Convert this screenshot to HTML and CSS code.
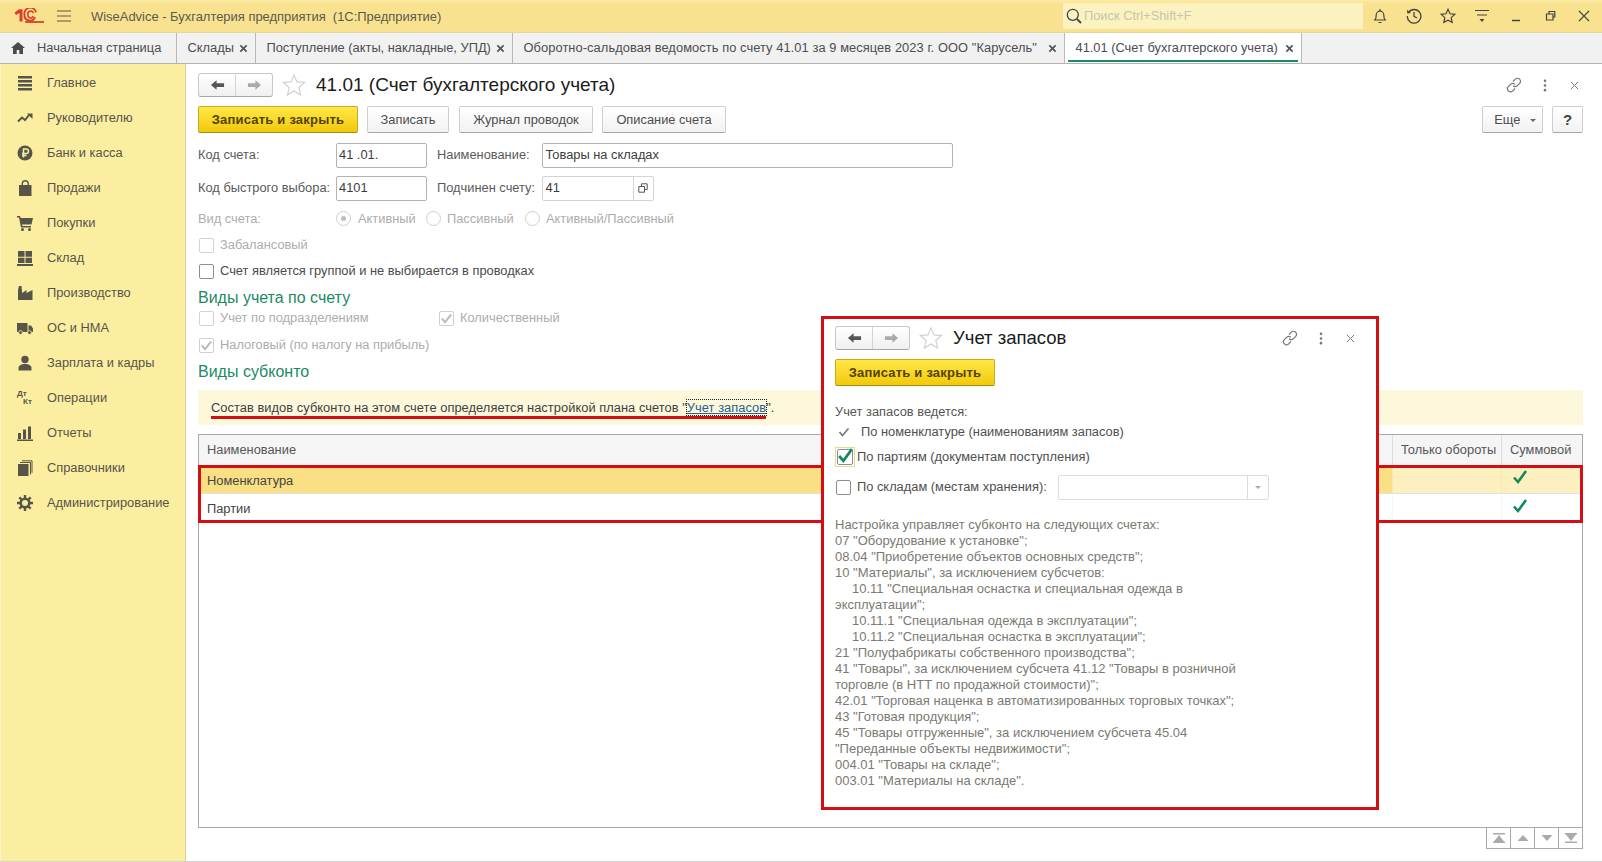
FILE: index.html
```html
<!DOCTYPE html>
<html lang="ru">
<head>
<meta charset="utf-8">
<title>41.01 (Счет бухгалтерского учета)</title>
<link rel="stylesheet" href="styles.css">
</head>
<body>
<svg class="defs" width="0" height="0" aria-hidden="true">
  <defs>
    <symbol id="i-back" viewBox="0 0 16 12"><path d="M1 6l6-5v3h8v4H7v3z"/></symbol>
    <symbol id="i-fwd" viewBox="0 0 16 12"><path d="M15 6L9 1v3H1v4h8v3z"/></symbol>
    <symbol id="i-star" viewBox="0 0 26 26"><path d="M13 2l3.2 7.6 8.3.7-6.3 5.4 1.9 8.1L13 19.5l-7.1 4.3 1.9-8.1-6.3-5.4 8.3-.7z" fill="#fff" stroke="#cfcfcf" stroke-width="1.2"/></symbol>
    <symbol id="i-link" viewBox="0 0 16 16"><g fill="none" stroke="#777" stroke-width="1.2"><path d="M7 4.5l2.3-2.3a3 3 0 0 1 4.4 4.2L11.4 8.7a3 3 0 0 1-4.2 0"/><path d="M9 11.5l-2.3 2.3a3 3 0 0 1-4.4-4.2l2.3-2.3a3 3 0 0 1 4.2 0"/></g></symbol>
    <symbol id="i-kebab" viewBox="0 0 4 14"><circle cx="2" cy="2" r="1.4" fill="#777"/><circle cx="2" cy="7" r="1.4" fill="#777"/><circle cx="2" cy="12" r="1.4" fill="#777"/></symbol>
    <symbol id="i-x" viewBox="0 0 10 10"><path d="M1 1l8 8M9 1l-8 8" fill="none" stroke="#777" stroke-width="1.1"/></symbol>
    <symbol id="i-tabx" viewBox="0 0 10 10"><path d="M1.5 1.5l7 7M8.5 1.5l-7 7" fill="none" stroke="#555" stroke-width="1.9"/></symbol>
    <symbol id="i-tick" viewBox="0 0 16 16"><path d="M2 8.5l4 4.5 8-11" fill="none" stroke="#118a5e" stroke-width="2.6"/></symbol>
    <symbol id="i-gtick" viewBox="0 0 14 14"><path d="M2 7l3.5 4L12 2.500" fill="none" stroke="#bdbdbd" stroke-width="2.2"/></symbol>
  </defs>
</svg>

<div class="app">
  <header class="titlebar">
    <svg class="logo" viewBox="0 0 30 16" width="30" height="16">
      <path d="M.5 4.800L5 1.200H8.500V13.500H5.500V5L2 7z" fill="#d8402b"/>
      <path d="M22 4.200A5.400 5.400 0 0 0 10.500 7a5.400 5.400 0 0 0 10.500 2" fill="none" stroke="#d8402b" stroke-width="1.900"/>
      <path d="M19.500 5.200A2.500 2.500 0 0 0 14 7a2.500 2.500 0 0 0 5 .8" fill="none" stroke="#d8402b" stroke-width="1.600"/>
      <path d="M11 14h19" stroke="#d8402b" stroke-width="1.800"/>
    </svg>
    <svg class="burger" viewBox="0 0 14 12" width="14" height="12"><path d="M0 1h14M0 6h14M0 11h14" stroke="#5d5a4a" stroke-width="1.200"/></svg>
    <span class="app-name">WiseAdvice - Бухгалтерия предприятия&nbsp; (1С:Предприятие)</span>
    <div class="search">
      <svg viewBox="0 0 16 16" width="16" height="16"><circle cx="6.800" cy="6.800" r="5.500" fill="none" stroke="#444" stroke-width="1.300"/><path d="M11 11l4 4" stroke="#444" stroke-width="1.800"/></svg>
      <span>Поиск Ctrl+Shift+F</span>
    </div>
    <div class="sys">
      <svg viewBox="0 0 16 16" width="16" height="16"><path d="M3 12c1.200-1.500 1.200-3 1.200-5a3.800 3.800 0 0 1 7.600 0c0 2 0 3.500 1.200 5zM1.800 12h12.400M6.500 14.500h3M8 1v1.500" fill="none" stroke="#444" stroke-width="1.200"/></svg>
      <svg viewBox="0 0 16 16" width="16" height="16"><path d="M2.600 4.300A6.800 6.800 0 1 1 1.300 8M8 4v4.300l3 1.700" fill="none" stroke="#444" stroke-width="1.300"/><path d="M1 1.800l.3 3.700 3.600-.5z" fill="#444"/></svg>
      <svg viewBox="0 0 16 16" width="16" height="16"><path d="M8 1.300l2 4.500 4.900.5-3.700 3.300 1 4.800L8 12.100l-4.200 2.300 1-4.800L1.100 6.300 6 5.800z" fill="none" stroke="#444" stroke-width="1.200"/></svg>
      <svg viewBox="0 0 16 16" width="16" height="16"><path d="M1 2.500h14M3 7h10" stroke="#444" stroke-width="1.200"/><path d="M5.500 11h5L8 14z" fill="#444"/></svg>
      <svg viewBox="0 0 16 16" width="16" height="16"><path d="M4 12.500h8" stroke="#444" stroke-width="1.500"/></svg>
      <svg viewBox="0 0 16 16" width="16" height="16"><path d="M4.500 6h6.500v6H4.500zM7 6V3.500h5.800V9H11" fill="none" stroke="#444" stroke-width="1.200"/></svg>
      <svg viewBox="0 0 16 16" width="16" height="16"><path d="M3 3l10 10M13 3L3 13" stroke="#444" stroke-width="1.100"/></svg>
    </div>
  </header>

  <nav class="tabs">
    <div class="tab tab-home">
      <svg viewBox="0 0 14 12" width="14" height="12"><path d="M7 0L0 6h2v6h3.700V8h2.600v4H12V6h2z" fill="#4b4b4b"/></svg>
      <span>Начальная страница</span>
    </div>
    <div class="tab tab-a"><span>Склады</span><svg class="tx" viewBox="0 0 10 10"><use href="#i-tabx"/></svg></div>
    <div class="tab tab-b"><span>Поступление (акты, накладные, УПД)</span><svg class="tx" viewBox="0 0 10 10"><use href="#i-tabx"/></svg></div>
    <div class="tab tab-c"><span>Оборотно-сальдовая ведомость по счету 41.01 за 9 месяцев 2023 г. ООО "Карусель"</span><svg class="tx" viewBox="0 0 10 10"><use href="#i-tabx"/></svg></div>
    <div class="tab tab-d"><span>41.01 (Счет бухгалтерского учета)</span><svg class="tx" viewBox="0 0 10 10"><use href="#i-tabx"/></svg></div>
  </nav>

  <div class="workspace">
    <aside class="sidebar">
      <div class="side-item"><svg viewBox="0 0 16 16"><path d="M1 1h14v2.400H1zM1 5h14v2.400H1zM1 9h14v2.400H1zM1 13h14v2.400H1z"/></svg><span>Главное</span></div>
      <div class="side-item"><svg viewBox="0 0 16 16"><path d="M1 11.500l4-4 3 2.500 4-5" fill="none" stroke="#57554a" stroke-width="2"/><path d="M10 3.500h5.500V9z"/></svg><span>Руководителю</span></div>
      <div class="side-item"><svg viewBox="0 0 16 16"><circle cx="8" cy="8" r="7.500"/><path d="M6.500 12.500V4h2.700a2.200 2.200 0 0 1 0 4.500H5M5 10.500h4.500" fill="none" stroke="#fbeea0" stroke-width="1.500"/></svg><span>Банк и касса</span></div>
      <div class="side-item"><svg viewBox="0 0 16 16"><path d="M2 5h12.500v11H2z"/><path d="M5.300 7V3.200a3 3 0 0 1 5.900 0V7" fill="none" stroke="#57554a" stroke-width="1.400"/></svg><span>Продажи</span></div>
      <div class="side-item"><svg viewBox="0 0 16 16"><path d="M0 1h3l.700 2H16l-1.500 6.500H5L5.500 11H14v1.500H4L2 2.500H0z"/><circle cx="5.500" cy="14.500" r="1.500"/><circle cx="12.500" cy="14.500" r="1.500"/></svg><span>Покупки</span></div>
      <div class="side-item"><svg viewBox="0 0 16 16"><path d="M1 1h6.500v5.800H1zM8.500 1H15v5.800H8.500zM1 7.800h6.500v5.200H1zM8.500 7.800H15v5.200H8.500zM0 14h16v2H0z"/></svg><span>Склад</span></div>
      <div class="side-item"><svg viewBox="0 0 16 16"><path d="M1 15V5l1-4h2.500l.700 7 4.300-3v3l6-3v10z"/></svg><span>Производство</span></div>
      <div class="side-item"><svg viewBox="0 0 16 16"><path d="M0 3h10.500v9H0zM11.500 5.500H14l2 3V12h-4.500z"/><circle cx="3.500" cy="12.500" r="1.900" stroke="#fbeea0" stroke-width=".8"/><circle cx="12.500" cy="12.500" r="1.900" stroke="#fbeea0" stroke-width=".8"/></svg><span>ОС и НМА</span></div>
      <div class="side-item"><svg viewBox="0 0 16 16"><circle cx="8" cy="4.500" r="3.700"/><path d="M1.500 15.500v-2.500c0-2.500 3-4 6.500-4s6.500 1.500 6.500 4v2.500z"/></svg><span>Зарплата и кадры</span></div>
      <div class="side-item"><span class="dtkt"><b>Дт</b><b class="kt">Кт</b></span><span>Операции</span></div>
      <div class="side-item"><svg viewBox="0 0 16 16"><path d="M1 8h3v6H1zM6 4.500h3V14H6zM11 1.500h3V14h-3zM0 14.500h16V16H0z"/></svg><span>Отчеты</span></div>
      <div class="side-item"><svg viewBox="0 0 16 16"><path d="M1 4h10.500v12H1z"/><path d="M3 2.500h10.500v12M5 .8h10v12" fill="none" stroke="#57554a" stroke-width="1"/></svg><span>Справочники</span></div>
      <div class="side-item"><svg viewBox="0 0 16 16"><circle cx="8" cy="8" r="4.300" fill="none" stroke="#57554a" stroke-width="2.600"/><path d="M8 0v3M8 13v3M0 8h3M13 8h3M2.300 2.300l2.200 2.200M11.500 11.500l2.200 2.200M13.700 2.300l-2.200 2.200M4.500 11.500l-2.200 2.200" stroke="#57554a" stroke-width="2.400"/></svg><span>Администрирование</span></div>
    </aside>

    <main class="main">
      <div class="head">
        <div class="navpair">
          <span class="np-cell"><svg class="ar dark" viewBox="0 0 16 12"><use href="#i-back"/></svg></span>
          <span class="np-cell"><svg class="ar light" viewBox="0 0 16 12"><use href="#i-fwd"/></svg></span>
        </div>
        <svg class="star" viewBox="0 0 26 26"><use href="#i-star"/></svg>
        <h1 class="title">41.01 (Счет бухгалтерского учета)</h1>
        <div class="head-tools">
          <svg class="t-link" viewBox="0 0 16 16"><use href="#i-link"/></svg>
          <svg class="t-kebab" viewBox="0 0 4 14"><use href="#i-kebab"/></svg>
          <svg class="t-x" viewBox="0 0 10 10"><use href="#i-x"/></svg>
        </div>
      </div>

      <div class="cmd">
        <button class="btn btn-primary w-save">Записать и закрыть</button>
        <button class="btn w-write">Записать</button>
        <button class="btn w-journal">Журнал проводок</button>
        <button class="btn w-desc">Описание счета</button>
        <span class="cmd-fill"></span>
        <button class="btn w-more">Еще <i class="caret"></i></button>
        <button class="btn w-help">?</button>
      </div>

      <div class="frow frow-1">
        <label class="lbl lbl-a">Код счета:</label>
        <div class="input w-code">41 .01.</div>
        <label class="lbl lbl-b">Наименование:</label>
        <div class="input w-name">Товары на складах</div>
      </div>
      <div class="frow frow-2">
        <label class="lbl lbl-a">Код быстрого выбора:</label>
        <div class="input w-code">4101</div>
        <label class="lbl lbl-b">Подчинен счету:</label>
        <div class="input w-parent"><span class="pv">41</span><span class="pick"><svg viewBox="0 0 10 10" width="10" height="10"><path d="M3.500 3.500V.8h5.700v5.700H6.500M.8 3.500h5.700v5.700H.8z" fill="none" stroke="#555" stroke-width="1"/></svg></span></div>
      </div>

      <div class="frow frow-radio off">
        <label class="lbl lbl-a">Вид счета:</label>
        <span class="radio on r1"></span><span class="rt rt1">Активный</span>
        <span class="radio r2"></span><span class="rt rt2">Пассивный</span>
        <span class="radio r3"></span><span class="rt">Активный/Пассивный</span>
      </div>

      <div class="check-row off chk-gap"><span class="cb"></span><span>Забалансовый</span></div>
      <div class="check-row chk-last"><span class="cb dark"></span><span>Счет является группой и не выбирается в проводках</span></div>

      <h2 class="sec">Виды учета по счету</h2>
      <div class="check-row off chk-pair">
        <span class="cb"></span><span class="pair-a">Учет по подразделениям</span>
        <span class="cb ticked"><svg viewBox="0 0 14 14"><use href="#i-gtick"/></svg></span><span>Количественный</span>
      </div>
      <div class="check-row off chk-last2"><span class="cb ticked"><svg viewBox="0 0 14 14"><use href="#i-gtick"/></svg></span><span>Налоговый (по налогу на прибыль)</span></div>

      <h2 class="sec">Виды субконто</h2>
      <div class="info">
        <span class="info-text">Состав видов субконто на этом счете определяется настройкой плана счетов "<a class="link">Учет запасов</a>".</span>
      </div>

      <div class="table">
        <div class="t-row t-head">
          <div class="c c-name">Наименование</div>
          <div class="c c-turn">Только обороты</div>
          <div class="c c-sum">Суммовой</div>
        </div>
        <div class="t-row t-sel">
          <div class="c c-name">Номенклатура</div>
          <div class="c c-turn"></div>
          <div class="c c-sum"><svg class="tick" viewBox="0 0 16 16"><use href="#i-tick"/></svg></div>
        </div>
        <div class="t-row t-plain">
          <div class="c c-name">Партии</div>
          <div class="c c-turn"></div>
          <div class="c c-sum"><svg class="tick" viewBox="0 0 16 16"><use href="#i-tick"/></svg></div>
        </div>
        <div class="mark-rows"></div>
      </div>
      <div class="t-foot">
        <span class="pg"><svg viewBox="0 0 12 10" width="12" height="10"><path d="M0 0h12v1.500H0zM6 2l5 6.500H1zM0 8.500h12V10H0z" fill="#aaa"/></svg></span>
        <span class="pg"><svg viewBox="0 0 12 10" width="12" height="10"><path d="M6 2l5.500 6H.5z" fill="#aaa"/></svg></span>
        <span class="pg"><svg viewBox="0 0 12 10" width="12" height="10"><path d="M6 8L.5 2h11z" fill="#aaa"/></svg></span>
        <span class="pg"><svg viewBox="0 0 12 10" width="12" height="10"><path d="M0 0h12v1.500H0zM1 1.500h10L6 8zM0 8.500h12V10H0z" fill="#aaa"/></svg></span>
      </div>
    </main>
  </div>

  <section class="popup">
    <div class="head pop-head">
      <div class="navpair">
        <span class="np-cell"><svg class="ar dark" viewBox="0 0 16 12"><use href="#i-back"/></svg></span>
        <span class="np-cell"><svg class="ar light" viewBox="0 0 16 12"><use href="#i-fwd"/></svg></span>
      </div>
      <svg class="star" viewBox="0 0 26 26"><use href="#i-star"/></svg>
      <h1 class="title pop-title">Учет запасов</h1>
      <div class="head-tools pop-tools">
        <svg class="t-link" viewBox="0 0 16 16"><use href="#i-link"/></svg>
        <svg class="t-kebab" viewBox="0 0 4 14"><use href="#i-kebab"/></svg>
        <svg class="t-x" viewBox="0 0 10 10"><use href="#i-x"/></svg>
      </div>
    </div>
    <button class="btn btn-primary w-save pop-save">Записать и закрыть</button>
    <div class="pop-cap">Учет запасов ведется:</div>
    <div class="pop-line pl-1"><svg class="mini-tick" viewBox="0 0 14 14"><path d="M2.500 7l3 3.500 6-7" fill="none" stroke="#777" stroke-width="1.700"/></svg><span>По номенклатуре (наименованиям запасов)</span></div>
    <div class="pop-line pl-2"><span class="focus"><span class="cb dark big"><svg viewBox="0 0 16 16"><use href="#i-tick"/></svg></span></span><span>По партиям (документам поступления)</span></div>
    <div class="pop-line pl-3"><span class="cb dark big2"></span><span class="pl3-text">По складам (местам хранения):</span>
      <div class="combo"><span class="combo-v"></span><span class="combo-b"><i class="caret pale"></i></span></div>
    </div>
    <div class="notes">
      <div>Настройка управляет субконто на следующих счетах:</div>
      <div>07 "Оборудование к установке";</div>
      <div>08.04 "Приобретение объектов основных средств";</div>
      <div>10 "Материалы", за исключением субсчетов:</div>
      <div><span class="ind"></span>10.11 "Специальная оснастка и специальная одежда в</div>
      <div>эксплуатации";</div>
      <div><span class="ind"></span>10.11.1 "Специальная одежда в эксплуатации";</div>
      <div><span class="ind"></span>10.11.2 "Специальная оснастка в эксплуатации";</div>
      <div>21 "Полуфабрикаты собственного производства";</div>
      <div>41 "Товары", за исключением субсчета 41.12 "Товары в розничной</div>
      <div>торговле (в НТТ по продажной стоимости)";</div>
      <div>42.01 "Торговая наценка в автоматизированных торговых точках";</div>
      <div>43 "Готовая продукция";</div>
      <div>45 "Товары отгруженные", за исключением субсчета 45.04</div>
      <div>"Переданные объекты недвижимости";</div>
      <div>004.01 "Товары на складе";</div>
      <div>003.01 "Материалы на складе".</div>
    </div>
  </section>
</div>
</body>
</html>
```
FILE: styles.css
```css
* { box-sizing: border-box; }
html, body { margin: 0; padding: 0; background: #fff; }
body { font: 12.85px/16px "Liberation Sans", Arial, sans-serif; color: #4a4a4a; }
.defs { position: absolute; }
svg { display: block; flex: none; }

.app { position: relative; width: 1602px; height: 862px; overflow: hidden; display: flex; flex-direction: column; }

/* title bar */
.titlebar { height: 32px; flex: none; display: flex; align-items: center; background: linear-gradient(#fbeaa6, #f9e28f 12%, #f9e28f); padding-left: 14px; }
.logo { margin-right: 13px; }
.burger { margin-right: 20px; }
.app-name { color: #5a5a50; font-size: 12.950px; width: 972px; padding-top: 2px; }
.search { width: 300px; height: 26px; background: #fcf2bf; display: flex; align-items: center; padding-left: 3px; gap: 2px; color: #c7c4ae; }
.sys { display: flex; margin-left: 9px; }
.sys svg { margin-right: 18px; }
.sys svg:last-child { margin-right: 0; }

/* tabs */
.tabs { height: 32px; flex: none; display: flex; background: #f1f1f1; border-bottom: 1px solid #b4b4b4; border-top: 1px solid #e2d6a2; }
.tab { position: relative; display: flex; align-items: center; border-right: 1px solid #b9b9b9; color: #4d4d4d; padding-left: 10.500px; }
.tab-home { width: 177px; padding-left: 11px; gap: 12px; }
.tab-a { width: 79px; }
.tab-b { width: 257px; }
.tab-c { width: 552px; letter-spacing: .08px; }
.tab-d { width: 237px; background: #fff; border-left: 0; }
.tab-d::after { content: ""; position: absolute; left: 3px; right: 3px; bottom: 1px; height: 2px; background: #1c8a63; }
.tx { width: 9px; height: 9px; position: absolute; right: 7px; top: 11px; }

/* layout */
.workspace { flex: 1; display: flex; min-height: 0; border-bottom: 1px solid #d4d4d4; }
.sidebar { width: 186px; flex: none; background: #fbeea0; border-left: 1px solid #fdf5c8; border-right: 1px solid #d9d1a0; padding-top: 1px; }
.side-item { height: 35px; display: flex; align-items: center; color: #57554a; padding-left: 16px; }
.side-item svg { width: 16px; height: 16px; fill: #57554a; margin-right: 14px; }
.dtkt { width: 16px; height: 16px; margin-right: 14px; position: relative; font-size: 8px; line-height: 8px; }
.dtkt b { position: absolute; left: 0; top: 0; color: #57554a; }
.dtkt b.kt { left: 6px; top: 8px; }

.main { flex: 1; min-width: 0; display: flex; flex-direction: column; padding: 9px 19px 12px 12px; }

/* head */
.head { height: 24px; flex: none; display: flex; align-items: center; }
.navpair { width: 75px; height: 24px; display: flex; border: 1px solid #c8c8c8; border-bottom-color: #a8a8a8; border-radius: 3px; background: linear-gradient(#fff, #f0f0f0); }
.np-cell { flex: 1; display: flex; align-items: center; justify-content: center; }
.np-cell + .np-cell { border-left: 1px solid #d4d4d4; }
.ar { width: 15px; height: 12px; }
.ar.dark { fill: #555; }
.ar.light { fill: #aaa; }
.star { width: 24px; height: 24px; margin-left: 9px; }
.title { margin: 0 0 0 10px; font-size: 19px; font-weight: 400; line-height: 24px; color: #1c1c1c; }
.head-tools { margin-left: auto; display: flex; align-items: center; }
.t-link { width: 16px; height: 16px; }
.t-kebab { width: 4px; height: 13px; margin-left: 21px; }
.t-x { width: 9px; height: 9px; margin-left: 23px; margin-right: 4px; }

/* command bar */
.cmd { height: 27px; flex: none; display: flex; margin-top: 9px; }
.cmd-fill { flex: 1; }
.btn { height: 27px; padding: 0; font: inherit; color: #4d4d4d; border: 1px solid #cfcfcf; border-bottom-color: #a5a5a5; border-radius: 2px; background: linear-gradient(#fff, #f2f2f2); display: block; }
.btn-primary { color: #544200; font-size: 13px; font-weight: bold; letter-spacing: .2px; border-color: #c9aa1e #c9aa1e #a58a10; background: linear-gradient(#ffe84a, #f2c90a); }
.w-save { width: 160px; margin-right: 9px; }
.w-write { width: 82px; margin-right: 10px; }
.w-journal { width: 134px; margin-right: 9px; }
.w-desc { width: 124px; }
.w-more { width: 61px; margin-right: 9px; padding-left: 5px; }
.w-help { width: 31px; font-size: 15px; font-weight: bold; color: #444; }
.caret { display: inline-block; width: 0; height: 0; border: 3px solid transparent; border-top-color: #666; border-bottom: 0; margin-left: 6px; vertical-align: middle; }
.caret.pale { border-top-color: #aaa; margin: 0; }

/* form */
.frow { height: 24px; flex: none; display: flex; align-items: center; }
.frow-1 { margin-top: 10px; }
.frow-2 { margin-top: 9px; }
.frow-radio { margin-top: 6px; height: 25px; }
.lbl { display: block; color: #5a5a5a; }
.lbl-a { width: 138px; }
.lbl-b { width: 104.500px; }
.input { height: 25px; border: 1px solid #b3b3b3; border-radius: 2px; padding-left: 2px; line-height: 22px; color: #3c3c3c; background: #fff; }
.w-code { width: 91px; margin-right: 10px; }
.w-name { width: 411px; padding-left: 3px; }
.w-parent { width: 112px; display: flex; padding: 0; border-color: #d4d4d4; }
.pv { flex: 1; padding-left: 3px; }
.pick { width: 20px; border-left: 1px solid #d4d4d4; display: flex; align-items: center; justify-content: center; }

.off, .off .lbl { color: #adadad; }
.radio { width: 15px; height: 15px; border: 1px solid #cfcfcf; border-radius: 50%; flex: none; position: relative; background: #fff; }
.radio.on::after { content: ""; position: absolute; left: 4px; top: 4px; width: 5px; height: 5px; border-radius: 50%; background: #bdbdbd; }
.r1 { margin-right: 7px; }
.rt1 { width: 68px; }
.rt2 { width: 78px; }
.r2 { margin-right: 6px; }
.r3 { margin-right: 6px; }

.check-row { height: 22px; flex: none; display: flex; align-items: center; }
.chk-gap { margin-top: 3px; }
.chk-last { margin-top: 4px; }
.chk-last2 { margin-top: 5px; }
.cb { width: 15px; height: 15px; margin-left: 1px; margin-right: 6px; border: 1px solid #d4d4d4; border-radius: 2px; background: #fff; flex: none; position: relative; }
.cb.dark { border-color: #8e8e8e; }
.cb.ticked { border-color: #cfcfcf; }
.cb svg { position: absolute; left: 0; top: 0; width: 13px; height: 13px; }
.pair-a { width: 218px; }

.sec { margin: 6px 0 0; height: 19px; flex: none; font-size: 16px; font-weight: 400; line-height: 20px; color: #1d8a62; }
.sec + .info { margin-top: 9px; }

.info { height: 35px; flex: none; background: #fdf8dc; display: flex; align-items: center; padding-left: 13px; }
.info-text { color: #3f3f3f; position: relative; letter-spacing: .05px; }
.info-text::after { content: ""; position: absolute; left: 0; right: 8px; top: 16px; height: 3px; background: #d40f14; }
.link { color: #25608f; text-decoration: underline; outline: 1px dotted #222; }

/* table */
.table { margin-top: 9px; flex: 1; min-height: 0; position: relative; border: 1px solid #a9a9a9; display: flex; flex-direction: column; }
.t-row { display: flex; flex: none; }
.c { display: flex; align-items: center; padding-left: 8px; }
.c-name { flex: 1; }
.c-turn { width: 109px; border-left: 1px solid #dedede; }
.c-sum { width: 81px; border-left: 1px solid #dedede; }
.t-head { height: 31px; background: #f5f5f5; color: #555; }
.t-head .c { padding-bottom: 2px; }
.t-sel { height: 28px; background: #fdf0c0; color: #444; border-bottom: 1px solid #e2e2e2; }
.t-sel .c-name { padding-top: 2px; background: #fbdf85; }
.t-sel .c-turn, .t-sel .c-sum { border-left-color: #fbe8b0; }
.t-plain { height: 28px; color: #444; border-bottom: 1px solid #eee; padding-top: 2px; }
.t-plain .c-turn, .t-plain .c-sum { border-left-color: #f4f4f4; }
.tick { width: 16px; height: 16px; margin-left: 2px; margin-bottom: 6px; }
.mark-rows { position: absolute; left: -1px; right: -1px; top: 30px; height: 58px; border: 3px solid #d40f14; }
.t-foot { height: 21px; flex: none; display: flex; justify-content: flex-end; }
.pg { width: 25px; border: 1px solid #a9a9a9; border-top: 0; border-left-width: 1px; margin-left: -1px; display: flex; align-items: center; justify-content: center; background: #fff; }

/* popup */
.popup { position: absolute; left: 821px; top: 316px; width: 558px; height: 494px; border: 3px solid #d40f14; background: #fff; padding: 7px 11px 0 11px; z-index: 2; }
.pop-head { height: 24px; }
.pop-title { font-size: 18.500px; color: #1a1a1a; margin-left: 10px; }
.pop-tools { margin-right: 6px; }
.pop-save { width: 160px; margin: 9px 0 0; }
.pop-cap { margin-top: 18px; color: #555; }
.pop-line { display: flex; align-items: center; color: #4f4f4f; }
.pl-1 { height: 20px; margin-top: 2px; }
.mini-tick { width: 14px; height: 14px; margin-left: 2px; margin-right: 10px; }
.pl-2 { height: 24px; margin-top: 3px; }
.focus { width: 20px; height: 20px; margin-right: 2px; border: 1px solid #e6dc8a; display: flex; align-items: center; justify-content: center; }
.cb.big { margin: 0; width: 16px; height: 16px; }
.cb.big svg { left: -1px; top: -3px; width: 17px; height: 17px; }
.pl-3 { height: 26px; margin-top: 5px; }
.cb.big2 { margin-left: 1px; margin-right: 6px; width: 15px; height: 15px; }
.pl3-text { width: 201px; }
.combo { width: 211px; height: 25px; border: 1px solid #dcdcdc; border-radius: 2px; display: flex; }
.combo-v { flex: 1; }
.combo-b { width: 21px; border-left: 1px solid #dcdcdc; display: flex; align-items: center; justify-content: center; }
.notes { margin-top: 17px; color: #7a7a72; font-size: 13px; }
.notes div { height: 16px; white-space: nowrap; }
.ind { display: inline-block; width: 17px; }
```
